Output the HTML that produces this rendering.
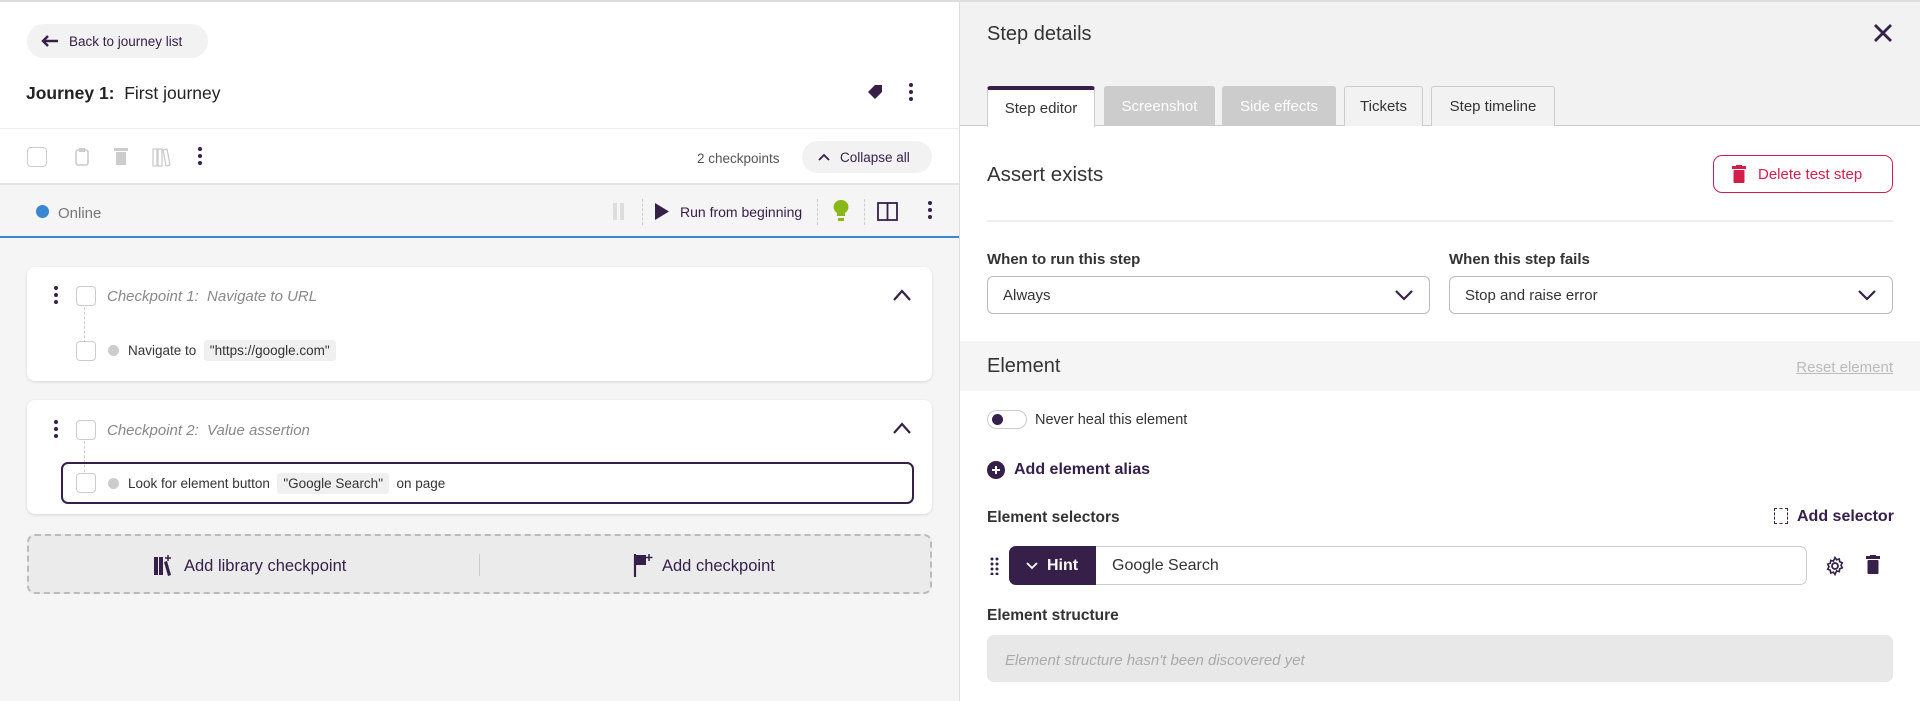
<!DOCTYPE html>
<html><head><meta charset="utf-8"><style>
*{box-sizing:border-box;margin:0;padding:0}
body{width:1920px;height:701px;overflow:hidden;font-family:"Liberation Sans",sans-serif;color:#333;background:#fff;position:relative;font-size:14px}
.a{position:absolute}
.t{margin-top:2px}
.cb{position:absolute;width:20px;height:20px;border:1.5px solid #ccc;border-radius:4px;background:#fff}
.dots{position:absolute;width:4px}
.dots i{display:block;width:4px;height:4px;border-radius:2px;background:#36204a;margin-bottom:3px}
.tag{background:#f0f0f0;padding:3px 6px;border-radius:3px}
.tab{position:absolute;top:86px;height:40px;border:1px solid #ccc;border-bottom:none;border-radius:3px 3px 0 0;font-size:15px;display:flex;align-items:center;justify-content:center}
.sel{position:absolute;height:38px;border:1px solid #bbb;border-radius:6px;background:#fff;font-size:15px;padding-left:15px;display:flex;align-items:center}
.sel svg{position:absolute;right:16px;top:13px}
</style></head><body>
<div class="a" style="left:0;top:0;width:1920px;height:2px;background:#ddd"></div>
<div class="a" style="left:0;top:2px;width:959px;height:699px;background:#f5f5f5"></div>
<div class="a" style="left:0;top:2px;width:959px;height:182px;background:#fff"></div>
<div class="a" style="left:27px;top:24px;width:181px;height:34px;background:#f2f2f2;border-radius:17px;font-size:13.5px;display:flex;align-items:center;padding-left:14px"><svg width="18" height="12" viewBox="0 0 18 12"><path d="M7 1L2 6l5 5M2 6h15" stroke="#36204a" stroke-width="2.4" fill="none"/></svg><span style="margin-left:10px;color:#36204a">Back to journey list</span></div>
<div class="a" style="left:26px;top:83px;font-size:17.5px;color:#222"><b style="font-weight:600">Journey 1:</b>&nbsp; First journey</div>
<svg class="a" style="left:866px;top:83px" width="18" height="18" viewBox="0 0 18 18"><path d="M2 9L9 2h7v7l-7 7z" fill="#36204a"/></svg>
<div class="dots" style="left:909px;top:83px"><i></i><i></i><i></i></div>
<div class="a" style="left:0;top:128px;width:959px;height:1px;background:#eee"></div>
<div class="cb" style="left:27px;top:147px"></div>
<svg class="a" style="left:74px;top:147px" width="16" height="20"><rect x="2" y="3" width="12" height="15" rx="2" fill="none" stroke="#ccc" stroke-width="1.6"/><rect x="5" y="1" width="6" height="4" fill="#ccc"/></svg>
<svg class="a" style="left:114px;top:147px" width="14" height="19"><rect x="0" y="1" width="14" height="3" fill="#ccc"/><rect x="2" y="5" width="10" height="13" fill="#ccc"/></svg>
<svg class="a" style="left:151px;top:147px" width="20" height="20"><path d="M2 2h4v17H2zM7 2h4v17H7zM12 3l4-1 3 16-4 1z" fill="none" stroke="#ccc" stroke-width="1.3"/></svg>
<div class="dots" style="left:198px;top:147px"><i></i><i></i><i></i></div>
<div class="a" style="left:697px;top:151px;font-size:13.5px;color:#555">2 checkpoints</div>
<div class="a" style="left:802px;top:141px;width:130px;height:32px;background:#f2f2f2;border-radius:16px;font-size:13.5px;color:#36204a;display:flex;align-items:center;padding-left:16px"><svg width="12" height="8"><path d="M1 7l5-5 5 5" stroke="#36204a" stroke-width="1.8" fill="none"/></svg><span style="margin-left:10px">Collapse all</span></div>
<div class="a" style="left:0;top:183px;width:959px;height:2px;background:#e4e4e4"></div>
<div class="a" style="left:0;top:236px;width:959px;height:2px;background:#3a86d1"></div>
<div class="a" style="left:36px;top:205px;width:13px;height:13px;border-radius:50%;background:#3a86d1"></div>
<div class="a" style="left:58px;top:205px;font-size:15px;color:#777">Online</div>
<div class="a" style="left:613px;top:203px;width:4px;height:17px;background:#ddd"></div><div class="a" style="left:620px;top:203px;width:4px;height:17px;background:#ddd"></div>
<div class="a" style="left:642px;top:199px;height:26px;border-left:1px dashed #ccc"></div>
<svg class="a" style="left:655px;top:203px" width="14" height="17"><path d="M0 0l14 8.5L0 17z" fill="#36204a"/></svg>
<div class="a" style="left:680px;top:204px;font-size:14px;color:#36204a">Run from beginning</div>
<div class="a" style="left:817px;top:199px;height:26px;border-left:1px dashed #ccc"></div>
<svg class="a" style="left:833px;top:200px" width="16" height="23"><path d="M8 0a7 7 0 0 1 4 13v3H4v-3A7 7 0 0 1 8 0z" fill="#8bb818"/><rect x="5" y="18" width="6" height="3" fill="#8bb818"/></svg>
<div class="a" style="left:864px;top:199px;height:26px;border-left:1px dashed #ccc"></div>
<svg class="a" style="left:877px;top:202px" width="21" height="19"><rect x="1" y="1" width="19" height="17" fill="none" stroke="#36204a" stroke-width="1.8"/><path d="M10.5 1v17" stroke="#36204a" stroke-width="1.8"/></svg>
<div class="dots" style="left:928px;top:201px"><i></i><i></i><i></i></div>
<div class="a" style="left:27px;top:267px;width:905px;height:114px;background:#fff;border-radius:8px;box-shadow:0 1px 3px rgba(0,0,0,.12)"></div>
<div class="dots" style="left:54px;top:286px"><i></i><i></i><i></i></div>
<div class="cb" style="left:76px;top:286px"></div>
<div class="a" style="left:84px;top:307px;height:36px;border-left:1px dashed #ccc"></div>
<div class="a" style="left:107px;top:288px;font-size:15px;font-style:italic;color:#888">Checkpoint 1:&nbsp; Navigate to URL</div>
<svg class="a" style="left:893px;top:289px" width="18" height="12"><path d="M1 11l8-9 8 9" stroke="#36204a" stroke-width="2.2" fill="none"/></svg>
<div class="cb" style="left:76px;top:341px"></div>
<div class="a" style="left:108px;top:345px;width:11px;height:11px;border-radius:50%;background:#ccc"></div>
<div class="a" style="left:128px;top:343px;font-size:13.5px;color:#333">Navigate to&nbsp; <span class="tag">"https://google.com"</span></div>
<div class="a" style="left:27px;top:400px;width:905px;height:114px;background:#fff;border-radius:8px;box-shadow:0 1px 3px rgba(0,0,0,.12)"></div>
<div class="dots" style="left:54px;top:420px"><i></i><i></i><i></i></div>
<div class="cb" style="left:76px;top:420px"></div>
<div class="a" style="left:84px;top:441px;height:36px;border-left:1px dashed #ccc"></div>
<div class="a" style="left:107px;top:422px;font-size:15px;font-style:italic;color:#888">Checkpoint 2:&nbsp; Value assertion</div>
<svg class="a" style="left:893px;top:422px" width="18" height="12"><path d="M1 11l8-9 8 9" stroke="#36204a" stroke-width="2.2" fill="none"/></svg>
<div class="a" style="left:61px;top:462px;width:853px;height:42px;border:2px solid #36204a;border-radius:7px"></div>
<div class="cb" style="left:76px;top:473px"></div>
<div class="a" style="left:108px;top:478px;width:11px;height:11px;border-radius:50%;background:#ccc"></div>
<div class="a" style="left:128px;top:476px;font-size:13.5px;color:#333">Look for element button&nbsp; <span class="tag">"Google Search"</span>&nbsp; on page</div>
<div class="a" style="left:27px;top:534px;width:905px;height:60px;background:#ebebeb;border:2px dashed #bbb;border-radius:8px"></div>
<div class="a" style="left:479px;top:554px;height:22px;border-left:1px solid #ccc"></div>
<svg class="a" style="left:153px;top:554px" width="20" height="22"><path d="M1 3h4v18H1zM6 3h4v18H6zM11 8l3-1 4 14-3 1z" fill="#36204a"/><path d="M15 1v6M12 4h6" stroke="#36204a" stroke-width="1.5"/></svg>
<div class="a" style="left:184px;top:557px;font-size:16.5px;color:#36204a">Add library checkpoint</div>
<svg class="a" style="left:633px;top:553px" width="20" height="24"><path d="M2 1v23" stroke="#36204a" stroke-width="2.2"/><path d="M3 2h10v10H3z" fill="#36204a"/><path d="M16 1v7M12.5 4.5h7" stroke="#36204a" stroke-width="1.5"/></svg>
<div class="a" style="left:662px;top:557px;font-size:16.5px;color:#36204a">Add checkpoint</div>
<div class="a" style="left:959px;top:2px;width:1px;height:699px;background:#ddd"></div>
<div class="a" style="left:960px;top:2px;width:960px;height:124px;background:#f2f2f2"></div>
<div class="a" style="left:960px;top:125px;width:960px;height:1px;background:#ccc"></div>
<div class="a" style="left:987px;top:23px;font-size:20px;color:#333">Step details</div>
<svg class="a" style="left:1873px;top:23px" width="20" height="20"><path d="M2 2l16 16M18 2L2 18" stroke="#36204a" stroke-width="2.8"/></svg>
<div class="tab" style="left:987px;width:108px;background:#fff;border-top:4px solid #36204a;height:41px;color:#333">Step editor</div>
<div class="tab" style="left:1104px;width:111px;background:#ccc;border-color:#ccc;color:#fff">Screenshot</div>
<div class="tab" style="left:1222px;width:114px;background:#ccc;border-color:#ccc;color:#fff">Side effects</div>
<div class="tab" style="left:1344px;width:79px;background:#f2f2f2;color:#333">Tickets</div>
<div class="tab" style="left:1431px;width:124px;background:#f2f2f2;color:#333">Step timeline</div>
<div class="a" style="left:987px;top:163px;font-size:20.5px;color:#333">Assert exists</div>
<div class="a" style="left:1713px;top:155px;width:180px;height:38px;border:1.5px solid #d41e4a;border-radius:9px;display:flex;align-items:center;padding-left:18px;color:#d41e4a;font-size:15px"><svg width="14" height="18"><rect x="0" y="1" width="14" height="3" fill="#d41e4a"/><rect x="4" y="0" width="6" height="2" fill="#d41e4a"/><rect x="1.5" y="5" width="11" height="13" rx="1" fill="#d41e4a"/></svg><span style="margin-left:12px">Delete test step</span></div>
<div class="a" style="left:987px;top:220px;width:906px;height:2px;background:#eee"></div>
<div class="a" style="left:987px;top:251px;font-size:15px;font-weight:bold;color:#333">When to run this step</div>
<div class="a" style="left:1449px;top:251px;font-size:15px;font-weight:bold;color:#333">When this step fails</div>
<div class="sel" style="left:987px;top:276px;width:443px">Always<svg width="18" height="11"><path d="M1 1l8 8 8-8" stroke="#36204a" stroke-width="2.2" fill="none"/></svg></div>
<div class="sel" style="left:1449px;top:276px;width:444px">Stop and raise error<svg width="18" height="11"><path d="M1 1l8 8 8-8" stroke="#36204a" stroke-width="2.2" fill="none"/></svg></div>
<div class="a" style="left:960px;top:341px;width:960px;height:50px;background:#f5f5f5"></div>
<div class="a" style="left:987px;top:355px;font-size:20px;color:#333">Element</div>
<div class="a" style="left:1784px;top:359px;font-size:15px;color:#bbb;text-decoration:underline;width:109px;text-align:right">Reset element</div>
<div class="a" style="left:987px;top:410px;width:40px;height:19px;border:1.5px solid #ccc;border-radius:10px"></div>
<div class="a" style="left:992px;top:414px;width:11px;height:11px;border-radius:50%;background:#36204a"></div>
<div class="a" style="left:1035px;top:412px;font-size:14.5px;color:#333">Never heal this element</div>
<svg class="a" style="left:987px;top:461px" width="18" height="18"><circle cx="9" cy="9" r="9" fill="#36204a"/><path d="M9 5v8M5 9h8" stroke="#fff" stroke-width="2"/></svg>
<div class="a" style="left:1014px;top:461px;font-size:16px;font-weight:bold;color:#36204a">Add element alias</div>
<div class="a" style="left:987px;top:509px;font-size:15.5px;font-weight:bold;color:#333">Element selectors</div>
<div class="a" style="left:1774px;top:508px;width:14px;height:16px;border:1.5px dashed #36204a"></div>
<div class="a" style="left:1797px;top:508px;font-size:16px;font-weight:bold;color:#36204a;width:96px;text-align:right;white-space:nowrap">Add selector</div>
<svg class="a" style="left:990px;top:557px" width="10" height="18"><g fill="#36204a"><circle cx="2" cy="2" r="1.5"/><circle cx="7" cy="2" r="1.5"/><circle cx="2" cy="7" r="1.5"/><circle cx="7" cy="7" r="1.5"/><circle cx="2" cy="12" r="1.5"/><circle cx="7" cy="12" r="1.5"/><circle cx="2" cy="17" r="1.5"/><circle cx="7" cy="17" r="1.5"/></g></svg>
<div class="a" style="left:1009px;top:546px;width:798px;height:39px;border:1px solid #ccc;border-radius:7px;background:#fff"></div>
<div class="a" style="left:1009px;top:546px;width:87px;height:39px;background:#36204a;border-radius:7px 0 0 7px;color:#fff;font-size:16px;font-weight:bold;display:flex;align-items:center;padding-left:17px"><svg width="12" height="8"><path d="M1 1l5 5 5-5" stroke="#fff" stroke-width="1.8" fill="none"/></svg><span style="margin-left:9px">Hint</span></div>
<div class="a" style="left:1112px;top:557px;font-size:16px;color:#333">Google Search</div>
<svg class="a" style="left:1825px;top:556px" width="20" height="20" viewBox="0 0 20 20"><circle cx="10" cy="10" r="3" fill="none" stroke="#36204a" stroke-width="1.8"/><path d="M10 1.5l1.6 2.3 2.7-.8.4 2.8 2.6 1-1.3 2.5 1.3 2.5-2.6 1-.4 2.8-2.7-.8L10 18.5l-1.6-2.3-2.7.8-.4-2.8-2.6-1L4 10.7 2.7 8.2l2.6-1 .4-2.8 2.7.8z" fill="none" stroke="#36204a" stroke-width="1.6"/></svg>
<svg class="a" style="left:1866px;top:555px" width="14" height="19"><rect x="0" y="1" width="14" height="3" fill="#36204a"/><rect x="4" y="0" width="6" height="2" fill="#36204a"/><rect x="1.5" y="5" width="11" height="14" rx="1" fill="#36204a"/></svg>
<div class="a" style="left:987px;top:607px;font-size:15.5px;font-weight:bold;color:#333">Element structure</div>
<div class="a" style="left:987px;top:635px;width:906px;height:47px;background:#e8e8e8;border-radius:7px;font-size:15px;font-style:italic;color:#aaa;display:flex;align-items:center;padding-left:18px;padding-top:3px">Element structure hasn't been discovered yet</div>
</body></html>
